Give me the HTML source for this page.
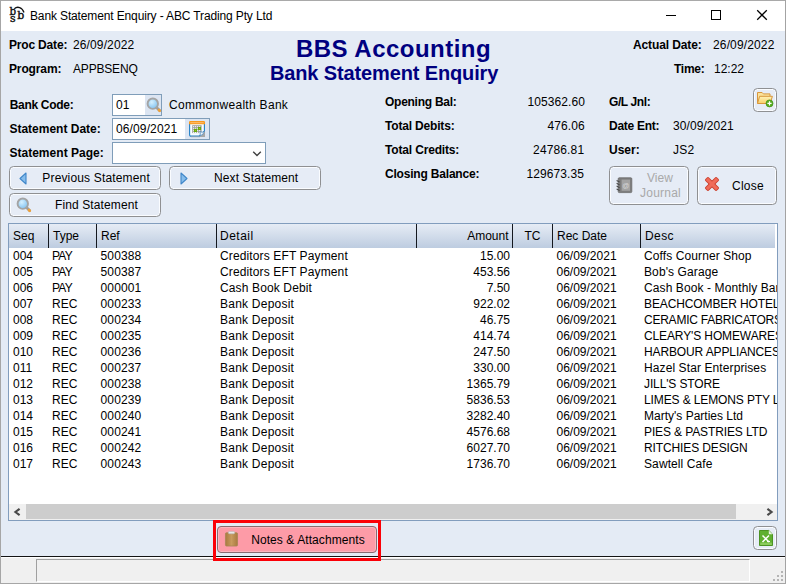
<!DOCTYPE html>
<html>
<head>
<meta charset="utf-8">
<title>Bank Statement Enquiry - ABC Trading Pty Ltd</title>
<style>
html,body{margin:0;padding:0;}
body{width:786px;height:584px;overflow:hidden;background:#e4ebf5;font-family:"Liberation Sans",Arial,sans-serif;font-size:12px;color:#000;position:relative;}
.t{position:absolute;white-space:nowrap;line-height:14px;height:14px;}
.b{font-weight:bold;}
.r{text-align:right;}
#titlebar{position:absolute;left:0;top:0;width:786px;height:31px;background:#fff;}
#titletext{position:absolute;left:30px;top:8px;font-size:12px;line-height:16px;color:#000;white-space:nowrap;}
.hd{position:absolute;white-space:nowrap;color:#000080;font-weight:bold;}
.inp{position:absolute;background:#fff;border:1px solid #7f9db9;box-sizing:border-box;}
.btn{position:absolute;box-sizing:border-box;border:1px solid #8f9092;border-radius:4.5px;background:#e6ecf6;box-shadow:inset 0 0 0 1px #fafcff;}
.btn .t{top:4px;}
svg{position:absolute;overflow:visible;}
#grid{position:absolute;left:8px;top:223px;width:770px;height:298px;background:#fff;border:1px solid #829dbd;box-sizing:border-box;overflow:hidden;}
#ghead{position:absolute;left:0;top:0;width:766px;height:24px;background:linear-gradient(#e6ecf5,#bdcce0);}
.hc{position:absolute;top:0;height:24px;border-right:1px solid #14181f;box-sizing:border-box;line-height:24px;white-space:nowrap;padding-left:4px;}
.row{position:absolute;left:0;width:766px;height:16px;line-height:16px;}
.row span{position:absolute;top:0;white-space:nowrap;}
#titletext{letter-spacing:-0.135px}
#procl{letter-spacing:-0.178px}
#procv{letter-spacing:0.122px}
#progl{letter-spacing:-0.129px}
#progv{letter-spacing:-0.186px}
#h1{letter-spacing:0.477px;margin-left:-1px}
#h2{letter-spacing:-0.129px;margin-left:-1.1px}
#actl{letter-spacing:-0.109px}
#actv{letter-spacing:0.144px}
#timel{letter-spacing:-0.275px}
#timev{margin-left:1px}
#bcl{letter-spacing:-0.3px;margin-left:0.7px}
#cwb{letter-spacing:0.3px}
#sdl{margin-left:0.4px}
#sdv{letter-spacing:0.122px}
#spl{letter-spacing:0.028px;margin-left:0.4px}
#prev{letter-spacing:0.159px;margin-left:-0.7px}
#next{letter-spacing:0.115px;margin-left:-1px}
#find{letter-spacing:0.115px}
#obl{letter-spacing:-0.264px}
#obv{letter-spacing:0.1px}
#tdl{letter-spacing:-0.175px}
#tdv{letter-spacing:0.1px;margin-left:-0.2px}
#tcl{letter-spacing:-0.162px}
#tcv{letter-spacing:0.129px;margin-left:-0.8px}
#cbl{letter-spacing:-0.193px}
#cbv{letter-spacing:0.074px;margin-left:-1px}
#gll{letter-spacing:-0.4px}
#del{letter-spacing:-0.263px}
#dev{letter-spacing:0.078px}
#usv{letter-spacing:0.3px}
#jrnl{letter-spacing:0.233px}
#close{letter-spacing:0.25px}
#notes{letter-spacing:0.078px;margin-left:0.2px}
</style>
</head>
<body>
<svg width="0" height="0" style="left:0;top:0"><defs>
<radialGradient id="lens" cx="0.4" cy="0.35" r="0.7"><stop offset="0" stop-color="#d6f0ff"/><stop offset="1" stop-color="#7cc0f0"/></radialGradient>
<linearGradient id="fold" x1="0" y1="0" x2="0" y2="1"><stop offset="0" stop-color="#fff3b8"/><stop offset="1" stop-color="#f7cf6a"/></linearGradient>
<linearGradient id="clip" x1="0" y1="0" x2="1" y2="0"><stop offset="0" stop-color="#a97a3f"/><stop offset="0.5" stop-color="#c89a5e"/><stop offset="1" stop-color="#a97a3f"/></linearGradient>

</defs></svg>
<div id="titlebar"></div>
<div style="position:absolute;left:0;top:0;width:786px;height:1px;background:#a9a9a9"></div>
<div style="position:absolute;left:0;top:0;width:1px;height:584px;background:#a6a6a6"></div>
<div style="position:absolute;left:785px;top:0;width:1px;height:584px;background:#a3a3a3"></div>
<svg style="left:9px;top:6px" width="18" height="18" viewBox="0 0 18 18"><g style="font-family:'DejaVu Serif','Liberation Serif',serif;font-size:10.5px" fill="#111" stroke="#111" stroke-width="0.4"><text x="0.6" y="8.8" textLength="6.6" lengthAdjust="spacingAndGlyphs">b</text><text x="0.9" y="15.9" textLength="5.6" lengthAdjust="spacingAndGlyphs">s</text><text x="8.2" y="12.9" textLength="7" lengthAdjust="spacingAndGlyphs">b</text></g><path d="M5.3 2.7 C8.5 -0.1 13.2 1.3 15 6.5" fill="none" stroke="#111" stroke-width="1.3"/></svg>
<div id="titletext">Bank Statement Enquiry - ABC Trading Pty Ltd</div>
<svg style="left:663px;top:10px" width="110" height="12" viewBox="0 0 110 12"><path d="M3 5.5h10" stroke="#000" fill="none"/><rect x="48.5" y="0.5" width="9" height="9" stroke="#000" fill="none"/><path d="M94.2 0.2l9.6 9.6M103.8 0.2l-9.6 9.6" stroke="#000" stroke-width="1.25" fill="none"/></svg>

<div id="procl" class="t b" style="left:9px;top:38px">Proc Date:</div>
<div id="procv" class="t" style="left:73px;top:38px">26/09/2022</div>
<div id="progl" class="t b" style="left:9px;top:62px">Program:</div>
<div id="progv" class="t" style="left:73px;top:62px">APPBSENQ</div>
<div id="h1" class="hd" style="left:297px;top:35px;font-size:24px;line-height:28px">BBS Accounting</div>
<div id="h2" class="hd" style="left:271px;top:61px;font-size:20px;line-height:24px">Bank Statement Enquiry</div>
<div id="actl" class="t b" style="left:633px;top:38px">Actual Date:</div>
<div id="actv" class="t" style="left:713px;top:38px">26/09/2022</div>
<div id="timel" class="t b" style="left:674px;top:62px">Time:</div>
<div id="timev" class="t" style="left:713px;top:62px">12:22</div>

<div id="bcl" class="t b" style="left:9px;top:98px">Bank Code:</div>
<div class="inp" style="left:112px;top:94px;width:50px;height:22px"><div style="position:absolute;left:32px;top:0;width:16px;height:20px;background:#dce5f2"></div></div>
<svg style="left:145.5px;top:96.7px" width="16" height="16" viewBox="0 0 16 16"><path d="M10.8 10.8L13.6 13.6" stroke="#9c9c9c" stroke-width="2.8" stroke-linecap="round"/><path d="M13 13L13.7 13.7" stroke="#eda13a" stroke-width="2.8" stroke-linecap="round"/><circle cx="6.8" cy="6.7" r="5.2" fill="url(#lens)" stroke="#a4a4a4" stroke-width="1.9"/></svg>
<div id="bcv" class="t" style="left:116px;top:98px">01</div>
<div id="cwb" class="t" style="left:169px;top:98px">Commonwealth Bank</div>
<div id="sdl" class="t b" style="left:9px;top:122px">Statement Date:</div>
<div class="inp" style="left:112px;top:118px;width:98px;height:22px"><div style="position:absolute;left:72px;top:0;width:24px;height:20px;background:#dce5f2"></div></div>
<svg style="left:189px;top:121px" width="16" height="16" viewBox="0 0 16 16"><path d="M0.6 2.5h14.8v7.6l-5.2 5H2q-1.4 0-1.4-1.4z" fill="#f8fdff" stroke="#2380c6" stroke-width="1.1"/><path d="M2 15.8h9" stroke="#a9a9a9" stroke-width="0.7"/><path d="M0 1.2q0-1.2 1.2-1.2h13.6q1.2 0 1.2 1.2v2H0z" fill="#f8981d"/><path d="M1.3 1.7h13.4" stroke="#fcc88a" stroke-width="0.8"/><rect x="3.2" y="4.2" width="9.4" height="7.9" fill="#9d9d9d"/><g fill="#fff"><rect x="4.1" y="5.1" width="1.1" height="1.1"/><rect x="6.1" y="5.1" width="1.1" height="1.1"/><rect x="8.1" y="5.1" width="1.1" height="1.1"/><rect x="10.1" y="5.1" width="1.1" height="1.1"/><rect x="4.1" y="7.1" width="1.1" height="1.1"/><rect x="6.1" y="7.1" width="1.1" height="1.1"/><rect x="8.1" y="7.1" width="1.1" height="1.1"/><rect x="10.1" y="7.1" width="1.1" height="1.1"/><rect x="4.1" y="9.1" width="1.1" height="1.1"/><rect x="6.1" y="9.1" width="1.1" height="1.1"/><rect x="8.1" y="9.1" width="1.1" height="1.1"/><rect x="10.1" y="9.1" width="1.1" height="1.1"/><rect x="4.1" y="11.0" width="1.1" height="1.1"/><rect x="6.1" y="11.0" width="1.1" height="1.1"/><rect x="8.1" y="11.0" width="1.1" height="1.1"/><rect x="10.1" y="11.0" width="1.1" height="1.1"/></g><path d="M10.2 16h5.8v-6z" fill="#a6a6a6"/><path d="M10.3 15.2q1.8-2 0.6-4.4q2.6 1 4.6-0.6q-1 4-5.2 5z" fill="#f3f6fa" stroke="#3a7db8" stroke-width="0.7"/><g fill="#6aa80f"><rect x="8.9" y="5.9" width="3.1" height="3.1"/><rect x="4.9" y="7.9" width="3.1" height="3.1"/></g><g fill="#9ccf2e"><rect x="10" y="7" width="0.9" height="0.9"/><rect x="6" y="9" width="0.9" height="0.9"/></g></svg>
<div id="sdv" class="t" style="left:116px;top:122px">06/09/2021</div>
<div id="spl" class="t b" style="left:9px;top:146px">Statement Page:</div>
<div class="inp" style="left:112px;top:142px;width:154px;height:22px"></div>
<svg style="left:252px;top:150px" width="10" height="7" viewBox="0 0 10 7"><path d="M1.2 1.7l3.8 3.8l3.8-3.8" stroke="#404040" stroke-width="1.35" fill="none"/></svg>

<div class="btn" style="left:9px;top:166px;width:152px;height:24px"><svg style="left:9.3px;top:5px" width="8" height="13" viewBox="0 0 8 13"><path d="M7 1L1 6.5L7 12z" fill="#86bdec" stroke="#3f86c9" stroke-width="1.1" stroke-linejoin="round"/></svg><div id="prev" class="t" style="left:33px">Previous Statement</div></div>
<div class="btn" style="left:169px;top:166px;width:152px;height:24px"><svg style="left:10px;top:5px" width="8" height="13" viewBox="0 0 8 13"><path d="M1 1L7 6.5L1 12z" fill="#86bdec" stroke="#3f86c9" stroke-width="1.1" stroke-linejoin="round"/></svg><div id="next" class="t" style="left:45px">Next Statement</div></div>
<div class="btn" style="left:9px;top:193px;width:152px;height:24px"><svg style="left:6px;top:2.8px" width="16" height="16" viewBox="0 0 16 16"><path d="M10.8 10.8L13.6 13.6" stroke="#9c9c9c" stroke-width="2.8" stroke-linecap="round"/><path d="M13 13L13.7 13.7" stroke="#eda13a" stroke-width="2.8" stroke-linecap="round"/><circle cx="6.8" cy="6.7" r="5.2" fill="url(#lens)" stroke="#a4a4a4" stroke-width="1.9"/></svg><div id="find" class="t" style="left:45px">Find Statement</div></div>

<div id="obl" class="t b" style="left:385px;top:95px">Opening Bal:</div>
<div id="obv" class="t r" style="left:485px;width:100px;top:95px">105362.60</div>
<div id="tdl" class="t b" style="left:385px;top:119px">Total Debits:</div>
<div id="tdv" class="t r" style="left:485px;width:100px;top:119px">476.06</div>
<div id="tcl" class="t b" style="left:385px;top:143px">Total Credits:</div>
<div id="tcv" class="t r" style="left:485px;width:100px;top:143px">24786.81</div>
<div id="cbl" class="t b" style="left:385px;top:167px">Closing Balance:</div>
<div id="cbv" class="t r" style="left:485px;width:100px;top:167px">129673.35</div>
<div id="gll" class="t b" style="left:609px;top:95px">G/L Jnl:</div>
<div id="del" class="t b" style="left:609px;top:119px">Date Ent:</div>
<div id="dev" class="t" style="left:673px;top:119px">30/09/2021</div>
<div id="usl" class="t b" style="left:609px;top:143px">User:</div>
<div id="usv" class="t" style="left:673px;top:143px">JS2</div>

<div class="btn" style="left:753px;top:88px;width:24px;height:24px"><svg style="left:2.2px;top:1.7px" width="18" height="16" viewBox="0 0 18 16"><path d="M1.5 12.5V1.5h4.6l1.3 1.4h6.6v2.3" fill="#fbe29a" stroke="#d8963c"/><path d="M1.5 12.5L3.6 5.3H16.4L14.2 12.5z" fill="url(#fold)" stroke="#d8963c" stroke-linejoin="round"/><circle cx="13.5" cy="12.4" r="3.5" fill="#55ad1f" stroke="#3f8f14" stroke-width="0.7"/><path d="M11.4 12.4h4.2M13.5 10.3v4.2" stroke="#fff" stroke-width="1.2"/></svg></div>
<div class="btn" style="left:609px;top:166px;width:80px;height:39px"><svg style="left:6px;top:10px" width="17" height="17" viewBox="0 0 17 17"><rect x="2.2" y="0.8" width="13.6" height="14.8" rx="1" fill="#7d7d7d" stroke="#6a6a6a" stroke-width="0.8"/><rect x="5.6" y="2.6" width="8.4" height="11.2" fill="#a3a3a3"/><text x="9.8" y="11" font-size="7" font-family="Liberation Sans, sans-serif" text-anchor="middle" fill="#d8d8d8">@</text><path d="M0.6 3.5l3 1.6M0.6 6.3l3 1.6M0.6 9.1l3 1.6M0.6 11.9l3 1.6" stroke="#4a4a4a" stroke-width="1.1"/></svg><div id="view" class="t" style="left:37px;top:4px;color:#a9a9a9">View</div><div id="jrnl" class="t" style="left:30px;top:19px;color:#a9a9a9">Journal</div></div>
<div class="btn" style="left:697px;top:166px;width:80px;height:39px"><svg style="left:6.2px;top:9.3px" width="16" height="16" viewBox="0 0 16 16"><g transform="translate(8 8)"><g fill="#cc4433" stroke="#cc4433" stroke-width="1.2" stroke-linejoin="round"><rect x="-7.6" y="-1.9" width="15.2" height="3.8" rx="0.8" transform="rotate(45)"/><rect x="-7.6" y="-1.9" width="15.2" height="3.8" rx="0.8" transform="rotate(-45)"/></g><g fill="#f06b59"><rect x="-7.3" y="-1.6" width="14.6" height="3.2" rx="0.7" transform="rotate(45)"/><rect x="-7.3" y="-1.6" width="14.6" height="3.2" rx="0.7" transform="rotate(-45)"/></g></g></svg><div id="close" class="t" style="left:34px;top:12px">Close</div></div>

<div id="grid">
<div id="ghead">
<div class="hc" style="left:0;width:40px">Seq</div>
<div class="hc" style="left:40px;width:48px">Type</div>
<div class="hc" style="left:88px;width:120px">Ref</div>
<div class="hc" style="left:208px;width:200px;padding-left:3px;letter-spacing:0.5px">Detail</div>
<div class="hc" style="left:408px;width:96px;text-align:right;padding-right:3.5px">Amount</div>
<div class="hc" style="left:504px;width:40px;text-align:center;padding-left:0">TC</div>
<div class="hc" style="left:544px;width:88px">Rec Date</div>
<div class="hc" style="left:632px;width:134px;border-right:none;letter-spacing:0.4px">Desc</div>
</div>
<div class="row" style="top:24px"><span style="left:4px">004</span><span style="left:43px;letter-spacing:-0.8px">PAY</span><span style="left:91.5px;letter-spacing:0.15px">500388</span><span style="left:211px;letter-spacing:0.13px">Creditors EFT Payment</span><span style="right:265px">15.00</span><span style="left:547.5px">06/09/2021</span><span style="left:635px;letter-spacing:0.1px">Coffs Courner Shop</span></div>
<div class="row" style="top:40px"><span style="left:4px">005</span><span style="left:43px;letter-spacing:-0.8px">PAY</span><span style="left:91.5px;letter-spacing:0.15px">500387</span><span style="left:211px;letter-spacing:0.13px">Creditors EFT Payment</span><span style="right:265px">453.56</span><span style="left:547.5px">06/09/2021</span><span style="left:635px;letter-spacing:0.1px">Bob's Garage</span></div>
<div class="row" style="top:56px"><span style="left:4px">006</span><span style="left:43px;letter-spacing:-0.8px">PAY</span><span style="left:91.5px;letter-spacing:0.15px">000001</span><span style="left:211px;letter-spacing:0.13px">Cash Book Debit</span><span style="right:265px">7.50</span><span style="left:547.5px">06/09/2021</span><span style="left:635px;letter-spacing:0.1px">Cash Book - Monthly Bank Fees</span></div>
<div class="row" style="top:72px"><span style="left:4px">007</span><span style="left:43px;letter-spacing:0">REC</span><span style="left:91.5px;letter-spacing:0.15px">000233</span><span style="left:211px;letter-spacing:0.23px">Bank Deposit</span><span style="right:265px">922.02</span><span style="left:547.5px">06/09/2021</span><span style="left:635px;letter-spacing:-0.12px">BEACHCOMBER HOTEL</span></div>
<div class="row" style="top:88px"><span style="left:4px">008</span><span style="left:43px;letter-spacing:0">REC</span><span style="left:91.5px;letter-spacing:0.15px">000234</span><span style="left:211px;letter-spacing:0.23px">Bank Deposit</span><span style="right:265px">46.75</span><span style="left:547.5px">06/09/2021</span><span style="left:635px;letter-spacing:-0.24px">CERAMIC FABRICATORS</span></div>
<div class="row" style="top:104px"><span style="left:4px">009</span><span style="left:43px;letter-spacing:0">REC</span><span style="left:91.5px;letter-spacing:0.15px">000235</span><span style="left:211px;letter-spacing:0.23px">Bank Deposit</span><span style="right:265px">414.74</span><span style="left:547.5px">06/09/2021</span><span style="left:635px;letter-spacing:-0.12px">CLEARY'S HOMEWARES</span></div>
<div class="row" style="top:120px"><span style="left:4px">010</span><span style="left:43px;letter-spacing:0">REC</span><span style="left:91.5px;letter-spacing:0.15px">000236</span><span style="left:211px;letter-spacing:0.23px">Bank Deposit</span><span style="right:265px">247.50</span><span style="left:547.5px">06/09/2021</span><span style="left:635px;letter-spacing:-0.12px">HARBOUR APPLIANCES</span></div>
<div class="row" style="top:136px"><span style="left:4px">011</span><span style="left:43px;letter-spacing:0">REC</span><span style="left:91.5px;letter-spacing:0.15px">000237</span><span style="left:211px;letter-spacing:0.23px">Bank Deposit</span><span style="right:265px">330.00</span><span style="left:547.5px">06/09/2021</span><span style="left:635px;letter-spacing:0.1px">Hazel Star Enterprises</span></div>
<div class="row" style="top:152px"><span style="left:4px">012</span><span style="left:43px;letter-spacing:0">REC</span><span style="left:91.5px;letter-spacing:0.15px">000238</span><span style="left:211px;letter-spacing:0.23px">Bank Deposit</span><span style="right:265px">1365.79</span><span style="left:547.5px">06/09/2021</span><span style="left:635px;letter-spacing:-0.12px">JILL'S STORE</span></div>
<div class="row" style="top:168px"><span style="left:4px">013</span><span style="left:43px;letter-spacing:0">REC</span><span style="left:91.5px;letter-spacing:0.15px">000239</span><span style="left:211px;letter-spacing:0.23px">Bank Deposit</span><span style="right:265px">5836.53</span><span style="left:547.5px">06/09/2021</span><span style="left:635px;letter-spacing:-0.12px">LIMES &amp; LEMONS PTY LTD</span></div>
<div class="row" style="top:184px"><span style="left:4px">014</span><span style="left:43px;letter-spacing:0">REC</span><span style="left:91.5px;letter-spacing:0.15px">000240</span><span style="left:211px;letter-spacing:0.23px">Bank Deposit</span><span style="right:265px">3282.40</span><span style="left:547.5px">06/09/2021</span><span style="left:635px;letter-spacing:0px">Marty's Parties Ltd</span></div>
<div class="row" style="top:200px"><span style="left:4px">015</span><span style="left:43px;letter-spacing:0">REC</span><span style="left:91.5px;letter-spacing:0.15px">000241</span><span style="left:211px;letter-spacing:0.23px">Bank Deposit</span><span style="right:265px">4576.68</span><span style="left:547.5px">06/09/2021</span><span style="left:635px;letter-spacing:-0.12px">PIES &amp; PASTRIES LTD</span></div>
<div class="row" style="top:216px"><span style="left:4px">016</span><span style="left:43px;letter-spacing:0">REC</span><span style="left:91.5px;letter-spacing:0.15px">000242</span><span style="left:211px;letter-spacing:0.23px">Bank Deposit</span><span style="right:265px">6027.70</span><span style="left:547.5px">06/09/2021</span><span style="left:635px;letter-spacing:-0.12px">RITCHIES DESIGN</span></div>
<div class="row" style="top:232px"><span style="left:4px">017</span><span style="left:43px;letter-spacing:0">REC</span><span style="left:91.5px;letter-spacing:0.15px">000243</span><span style="left:211px;letter-spacing:0.23px">Bank Deposit</span><span style="right:265px">1736.70</span><span style="left:547.5px">06/09/2021</span><span style="left:635px;letter-spacing:0.1px">Sawtell Cafe</span></div>
<div style="position:absolute;left:0;top:280px;width:768px;height:16px;background:#f0f0f0"></div>
<div style="position:absolute;left:17px;top:280px;width:710px;height:15px;background:#cdcdcd"></div>
<svg style="left:5px;top:283.6px" width="7" height="8" viewBox="0 0 7 8"><path d="M5.6 0.8L1.4 4l4.2 3.2" stroke="#4a4a4a" stroke-width="2.1" fill="none"/></svg>
<svg style="left:756.6px;top:283.6px" width="7" height="8" viewBox="0 0 7 8"><path d="M1.4 0.8L5.6 4l-4.2 3.2" stroke="#4a4a4a" stroke-width="2.1" fill="none"/></svg>
</div>

<!--REDRECT-->
<div class="btn" style="left:217px;top:526px;width:160px;height:27px;background:#fd9ba7;border-color:#8a6a70;box-shadow:inset 0 0 0 1px #fdb4bd;border-radius:4px"><svg style="left:7px;top:4px" width="13" height="15.8" viewBox="0 0 14 17"><rect x="0.5" y="1.8" width="13" height="14.4" rx="1.2" fill="url(#clip)" stroke="#a58553" stroke-width="0.8"/><rect x="3.6" y="0.4" width="6.8" height="2.6" rx="1" fill="#e8e8e8" stroke="#b5b5b5" stroke-width="0.6"/></svg><div id="notes" class="t" style="left:33px;top:6px">Notes &amp; Attachments</div></div>
<div class="btn" style="left:753px;top:526px;width:24px;height:24px"><svg style="left:5px;top:3px" width="14" height="16" viewBox="0 0 14 16"><path d="M0.5 0.5h9.3l3.7 3.7v11.3h-13z" fill="#5fb030" stroke="#4c9323"/><path d="M9.8 0.5v3.7h3.7z" fill="#e9f5df"/><rect x="1.2" y="12.6" width="11.6" height="2.4" fill="#8acb5b"/><path d="M3.5 5.5l6.5 6.5M10 5.5L3.5 12" stroke="#fff" stroke-width="1.5"/><path d="M8 11.5h3" stroke="#fff" stroke-width="1.2"/></svg></div>

<div style="position:absolute;left:1px;top:556px;width:784px;height:1px;background:#141414"></div>
<div style="position:absolute;left:1px;top:557px;width:784px;height:26px;background:#f0f0f0;border-top:1px solid #fff;box-sizing:border-box"></div>
<div style="position:absolute;left:36px;top:559px;width:714px;height:23px;border-left:1px solid #a0a0a0;border-top:1px solid #a0a0a0;border-right:1px solid #fff;border-bottom:1px solid #fff;box-sizing:border-box"></div>
<svg style="left:773px;top:571px" width="11" height="11" viewBox="0 0 11 11"><g fill="#b4b4b4"><rect x="8" y="0" width="2" height="2"/><rect x="4" y="4" width="2" height="2"/><rect x="8" y="4" width="2" height="2"/><rect x="0" y="8" width="2" height="2"/><rect x="4" y="8" width="2" height="2"/><rect x="8" y="8" width="2" height="2"/></g></svg>
<div style="position:absolute;left:0;top:583px;width:786px;height:1px;background:#a6a6a6"></div>
<div style="position:absolute;left:213px;top:520px;width:168px;height:41px;border:3px solid #fb0007;box-sizing:border-box"></div>
</body>
</html>
